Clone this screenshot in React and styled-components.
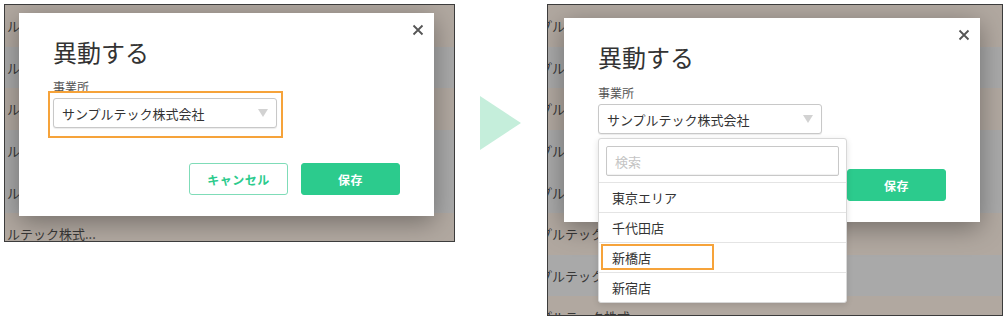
import React from "react";
import styled, { createGlobalStyle } from "styled-components";

const Green = "#2ccb8d";
const Orange = "#f6a33a";

const GlobalStyle = createGlobalStyle`
  body {
    margin: 0;
    background: #fff;
    font-family: "Noto Sans CJK JP", "Noto Sans", sans-serif;
    color: #333;
  }
`;

const Page = styled.div`
  display: flex;
  align-items: flex-start;
  padding: 4px;
`;

const Frame = styled.div`
  position: relative;
  width: ${(p) => p.w}px;
  height: ${(p) => p.h}px;
  border: 1px solid #3c3c3c;
  overflow: hidden;
  box-sizing: border-box;
`;

const Row = styled.div`
  height: 41.6px;
  display: flex;
  align-items: center;
  background: ${(p) => (p.tone === "b" ? "#b1a8a0" : "#a9a9a9")};
  font-size: 13px;
  color: #383838;
  white-space: nowrap;
  padding-left: 2px;
  text-indent: ${(p) => p.indent}px;
`;

/* the dialog lies over the dimmed table */
const Modal = styled.div`
  position: absolute;
  left: ${(p) => p.x}px;
  top: ${(p) => p.y}px;
  width: ${(p) => p.w}px;
  height: ${(p) => p.h}px;
  background: #fff;
  box-shadow: 0 6px 24px rgba(0, 0, 0, 0.35);
  padding: 25px 34px 0 34px;
  box-sizing: border-box;
  display: flex;
  flex-direction: column;
  align-items: flex-start;
`;

const Close = styled.button`
  position: absolute;
  top: 11px;
  right: 10px;
  width: 12px;
  height: 12px;
  padding: 0;
  border: 0;
  background: none;
  display: flex;
`;

const Title = styled.h2`
  margin: 0;
  font-size: 24px;
  line-height: 28px;
  font-weight: 400;
  color: #333;
`;

const Label = styled.div`
  margin-top: ${(p) => p.mt}px;
  font-size: 12px;
  line-height: 14px;
  color: #555;
`;

const Field = styled.div`
  position: relative;
  margin-top: 4px;
  width: 224px;
`;

const Select = styled.div`
  position: relative;
  height: 30px;
  border: 1px solid #c8c8c8;
  border-radius: 3px;
  box-sizing: border-box;
  display: flex;
  align-items: center;
  justify-content: space-between;
  padding: 0 8px;
  font-size: 13px;
  color: #333;
  background: #fff;
  box-shadow: 0 1px 1px rgba(0, 0, 0, 0.08);
`;

const Caret = styled.span`
  width: 0;
  height: 0;
  border-left: 5px solid transparent;
  border-right: 5px solid transparent;
  border-top: 8px solid #d2d2d2;
`;

/* orange annotation frame drawn over an element */
const Highlight = styled.span`
  position: absolute;
  top: ${(p) => p.t}px;
  left: ${(p) => p.l}px;
  right: ${(p) => p.r}px;
  bottom: ${(p) => p.b}px;
  border: 2px solid ${Orange};
  pointer-events: none;
`;

const Actions = styled.div`
  align-self: flex-end;
  margin-top: ${(p) => p.mt}px;
  display: flex;
  gap: 13px;
`;

const Button = styled.button`
  width: 99px;
  height: 32px;
  border-radius: 3px;
  font-family: inherit;
  font-size: 12px;
  font-weight: 700;
  letter-spacing: 0.5px;
  border: 1px solid ${(p) => (p.primary ? Green : "#7fdcb8")};
  background: ${(p) => (p.primary ? Green : "#fff")};
  color: ${(p) => (p.primary ? "#fff" : Green)};
`;

const Dropdown = styled.div`
  position: absolute;
  top: 34px;
  left: 0;
  width: 249px;
  background: #fff;
  border: 1px solid #d8d8d8;
  border-radius: 3px;
  box-shadow: 0 2px 6px rgba(0, 0, 0, 0.12);
  box-sizing: border-box;
  z-index: 2;
`;

const SearchBox = styled.div`
  padding: 7px 7px 6px 7px;
`;

const SearchInput = styled.div`
  height: 30px;
  border: 1px solid #c8c8c8;
  border-radius: 2px;
  box-sizing: border-box;
  display: flex;
  align-items: center;
  padding-left: 8px;
  font-size: 13px;
  color: #c4c4c4;
  box-shadow: inset 0 -1px 1px rgba(0, 0, 0, 0.06);
`;

const Option = styled.div`
  position: relative;
  height: 29px;
  border-top: 1px solid #e4e4e4;
  display: flex;
  align-items: center;
  padding-left: 13px;
  font-size: 13px;
  color: #333;
`;

const ArrowBox = styled.div`
  margin: 92px 26px 0 25px;
  display: flex;
`;

const tonesLeft = ["b", "g", "b", "g", "g", "b"];
const tonesRight = ["b", "g", "b", "g", "g", "b", "g", "b"];

function CloseIcon() {
  return (
    <svg width="12" height="12" viewBox="0 0 12 12">
      <path d="M1.5 1.5 L10.5 10.5 M10.5 1.5 L1.5 10.5" stroke="#555" strokeWidth="1.8" />
    </svg>
  );
}

function Background({ tones, indent }) {
  return tones.map((t, i) => (
    <Row key={i} tone={t} indent={indent}>
      {indent ? "プルテック株式..." : "ルテック株式..."}
    </Row>
  ));
}

function Dialog({ x, y, w, h, labelGap, actionsGap, open }) {
  const options = ["東京エリア", "千代田店", "新橋店", "新宿店"];
  return (
    <Modal x={x} y={y} w={w} h={h}>
      <Close>
        <CloseIcon />
      </Close>
      <Title>異動する</Title>
      <Label mt={labelGap}>事業所</Label>
      <Field>
        <Select>
          サンプルテック株式会社
          <Caret />
        </Select>
        {!open && <Highlight t={-7} l={-5} r={-6} b={-10} />}
        {open && (
          <Dropdown>
            <SearchBox>
              <SearchInput>検索</SearchInput>
            </SearchBox>
            {options.map((o) => (
              <Option key={o}>
                {o}
                {o === "新橋店" && <Highlight t={1} l={2} r={132} b={2} />}
              </Option>
            ))}
          </Dropdown>
        )}
      </Field>
      <Actions mt={actionsGap}>
        <Button>キャンセル</Button>
        <Button primary>保存</Button>
      </Actions>
    </Modal>
  );
}

export default function App() {
  return (
    <>
      <GlobalStyle />
      <Page>
        <Frame w={451} h={238}>
          <Background tones={tonesLeft} indent={0} />
          <Dialog x={14} y={8} w={415} h={203} labelGap={14} actionsGap={35} />
        </Frame>
        <ArrowBox>
          <svg width="41" height="54" viewBox="0 0 41 54">
            <polygon points="0,0 41,27 0,54" fill="#c5eedb" />
          </svg>
        </ArrowBox>
        <Frame w={456} h={312}>
          <Background tones={tonesRight} indent={-11} />
          <Dialog x={16} y={13} w={416} h={204} labelGap={15} actionsGap={35} open />
        </Frame>
      </Page>
    </>
  );
}
